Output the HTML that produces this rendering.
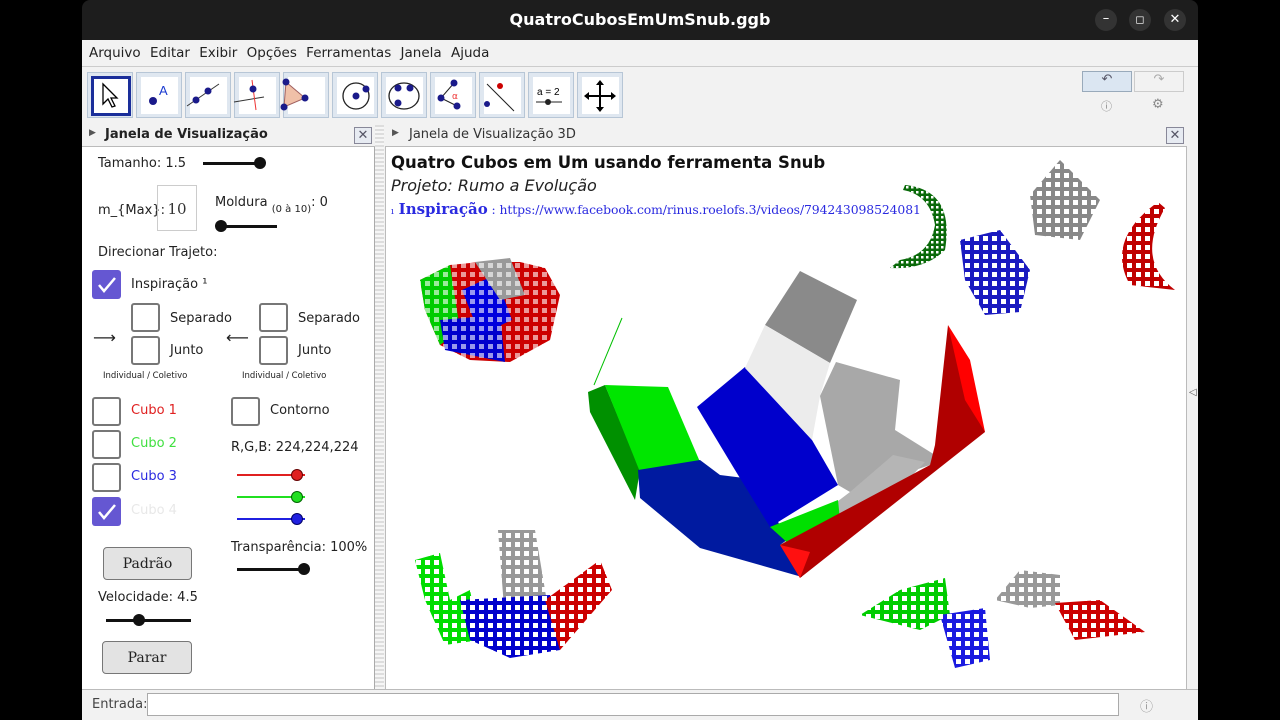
<!DOCTYPE html>
<html><head><meta charset="utf-8"><style>
*{margin:0;padding:0;box-sizing:border-box}
body{width:1280px;height:720px;background:#000;position:relative;overflow:hidden;font-family:"DejaVu Sans","Liberation Sans",sans-serif;font-size:13px;color:#222}
.a{position:absolute}
.cb{position:absolute;width:29px;height:29px;border:2px solid #777;border-radius:3px;background:#fff}
.cbk{position:absolute;width:29px;height:29px;border-radius:3px;background:#6557d2}
.btn{position:absolute;border:1px solid #777;border-radius:4px;background:#e3e3e3;font-family:"DejaVu Serif","Liberation Serif",serif;font-size:14px;text-align:center}
.tb{position:absolute;top:72px;width:46px;height:46px;background:#dfe7f0;border:1px solid #b7c6d6}
.tb div{position:absolute;left:4px;top:4px;width:37px;height:37px;background:#fff}
.sl{position:absolute;height:3px}
.kn{position:absolute;width:12px;height:12px;border-radius:50%}
</style></head><body>
<div class="a" style="left:82px;top:0;width:1116px;height:40px;background:#1d1d1d;border-radius:8px 8px 0 0"></div>
<div class="a" style="left:82px;top:10px;width:1116px;text-align:center;color:#fff;font-size:16px;font-weight:bold">QuatroCubosEmUmSnub.ggb</div>
<div class="a" style="left:1095px;top:9px;width:22px;height:22px;border-radius:50%;background:#333;color:#fff;text-align:center;line-height:20px">–</div>
<div class="a" style="left:1129px;top:9px;width:22px;height:22px;border-radius:50%;background:#333;color:#fff;text-align:center;line-height:21px;font-size:11px">◻</div>
<div class="a" style="left:1164px;top:9px;width:22px;height:22px;border-radius:50%;background:#333;color:#fff;text-align:center;line-height:22px">✕</div>
<div class="a" style="left:82px;top:40px;width:1116px;height:680px;background:#f2f2f2"></div>
<div class="a" style="left:89px;top:45px;font-size:13.5px;word-spacing:5px">Arquivo Editar Exibir Opções Ferramentas Janela Ajuda</div>
<div class="a" style="left:82px;top:66px;width:1116px;height:1px;background:#ccc"></div>
<div class="tb" style="left:87px"><div style="border:3px solid #1a2e9a;left:3px;top:3px;width:40px;height:40px"></div></div>
<div class="tb" style="left:136px"><div></div></div><div class="tb" style="left:185px"><div></div></div><div class="tb" style="left:234px"><div></div></div><div class="tb" style="left:283px"><div></div></div><div class="tb" style="left:332px"><div></div></div><div class="tb" style="left:381px"><div></div></div><div class="tb" style="left:430px"><div></div></div><div class="tb" style="left:479px"><div></div></div><div class="tb" style="left:528px"><div></div></div><div class="tb" style="left:577px"><div></div></div>
<svg class="a" style="left:82px;top:66px" width="560" height="60">
<path d="M21 18 L21 38 L26 33 L30 41 L33 40 L29 32 L35 32 Z" fill="#fff" stroke="#000" stroke-width="1.3"/>
<circle cx="71" cy="35" r="4" fill="#1a1a8a"/><text x="77" y="29" font-size="13" fill="#1a3ad0" font-family="Liberation Sans">A</text>
<line x1="105" y1="40" x2="137" y2="18" stroke="#333"/><circle cx="114" cy="34" r="3.5" fill="#1a1a8a"/><circle cx="126" cy="25" r="3.5" fill="#1a1a8a"/>
<line x1="152" y1="36" x2="182" y2="31" stroke="#333"/><line x1="170" y1="14" x2="174" y2="44" stroke="#e33"/><circle cx="171" cy="23" r="3.5" fill="#1a1a8a"/>
<path d="M204 16 L223 32 L202 41 Z" fill="#f0c0a8" stroke="#a06060"/><circle cx="204" cy="16" r="3.5" fill="#1a1a8a"/><circle cx="223" cy="32" r="3.5" fill="#1a1a8a"/><circle cx="202" cy="41" r="3.5" fill="#1a1a8a"/>
<circle cx="274" cy="30" r="13" fill="none" stroke="#222" stroke-width="1.3"/><circle cx="274" cy="30" r="3.5" fill="#1a1a8a"/><circle cx="284" cy="23" r="3.5" fill="#1a1a8a"/>
<ellipse cx="322" cy="30" rx="15" ry="13" fill="none" stroke="#222" stroke-width="1.3"/><circle cx="316" cy="22" r="3.5" fill="#1a1a8a"/><circle cx="328" cy="22" r="3.5" fill="#1a1a8a"/><circle cx="316" cy="37" r="3.5" fill="#1a1a8a"/>
<path d="M359 32 L372 17 M359 32 L375 40" stroke="#222"/><circle cx="359" cy="32" r="3.5" fill="#1a1a8a"/><circle cx="372" cy="17" r="3.5" fill="#1a1a8a"/><circle cx="375" cy="40" r="3.5" fill="#1a1a8a"/><text x="370" y="33" font-size="9" fill="#e33">α</text>
<line x1="405" y1="18" x2="432" y2="45" stroke="#222"/><circle cx="418" cy="20" r="3" fill="#c00"/><circle cx="405" cy="38" r="3" fill="#1a1a8a"/>
<text x="455" y="29" font-size="10" font-family="Liberation Sans">a = 2</text><line x1="454" y1="36" x2="480" y2="36" stroke="#222"/><circle cx="466" cy="36" r="3" fill="#222"/>
<path d="M518 16 V44 M504 30 H532" stroke="#000" stroke-width="2"/><path d="M518 14 l-4 5 h8z M518 46 l-4-5 h8z M502 30 l5-4 v8z M534 30 l-5-4 v8z" fill="#000"/>
</svg>
<div class="a" style="left:1082px;top:71px;width:50px;height:21px;background:#dbe6f2;border:1px solid #9ab;color:#556;text-align:center;font-size:13px">↶</div>
<div class="a" style="left:1134px;top:71px;width:50px;height:21px;background:#f2f2f2;border:1px solid #ccc;color:#aaa;text-align:center;font-size:13px">↷</div>
<div class="a" style="left:1101px;top:98px;color:#888;font-size:11px">ⓘ</div><div class="a" style="left:1152px;top:97px;color:#888;font-size:13px">⚙</div>
<div class="a" style="left:82px;top:125px;width:293px;height:22px;background:#f2f2f2;border-bottom:1px solid #bbb"></div>
<div class="a" style="left:89px;top:128px;font-size:9px;color:#555">▶</div>
<div class="a" style="left:105px;top:127px;font-weight:bold;font-size:13px">Janela de Visualização</div>
<div class="a" style="left:354px;top:127px;width:18px;height:17px;border:1px solid #889;background:#e7ebf2;text-align:center;font-size:13px;line-height:15px;color:#556">✕</div>
<div class="a" style="left:82px;top:147px;width:293px;height:542px;background:#fff;border-right:1px solid #aaa"></div>
<div class="a" style="left:375px;top:125px;width:9px;height:565px;background:repeating-linear-gradient(#ddd 0 2px,#f6f6f6 2px 4px)"></div>
<div class="a" style="left:385px;top:125px;width:802px;height:22px;background:#f2f2f2;border-bottom:1px solid #bbb"></div>
<div class="a" style="left:392px;top:128px;font-size:9px;color:#555">▶</div>
<div class="a" style="left:409px;top:127px;font-size:13px;color:#333">Janela de Visualização 3D</div>
<div class="a" style="left:1166px;top:127px;width:18px;height:17px;border:1px solid #889;background:#e7ebf2;text-align:center;font-size:13px;line-height:15px;color:#556">✕</div>
<div class="a" style="left:385px;top:147px;width:802px;height:542px;background:#fff;border-left:1px solid #bbb;border-right:1px solid #bbb"></div>
<div class="a" style="left:1189px;top:387px;font-size:10px;color:#555">◁</div>
<div class="a" style="left:98px;top:156px">Tamanho: 1.5</div>
<div class="sl" style="left:203px;top:162px;width:58px;background:#111"></div><div class="kn" style="left:254px;top:157px;background:#111"></div>
<div class="a" style="left:98px;top:203px">m_{Max}:</div>
<div class="a" style="left:157px;top:185px;width:40px;height:46px;border:1px solid #ccc;font-family:'DejaVu Serif',serif;font-size:15px;text-align:center;line-height:46px;color:#333">10</div>
<div class="a" style="left:215px;top:195px">Moldura <span style="font-size:10px;position:relative;top:6px">(0 à 10)</span>: 0</div>
<div class="sl" style="left:218px;top:225px;width:59px;background:#111"></div><div class="kn" style="left:215px;top:220px;background:#111"></div>
<div class="a" style="left:98px;top:245px">Direcionar Trajeto:</div>
<div class="cbk" style="left:92px;top:270px"></div>
<svg class="a" style="left:92px;top:270px" width="29" height="29"><path d="M7 15 L12 21 L23 8" fill="none" stroke="#fff" stroke-width="2.5"/></svg>
<div class="a" style="left:131px;top:277px">Inspiração ¹</div>
<div class="cb" style="left:131px;top:303px"></div><div class="a" style="left:170px;top:311px">Separado</div>
<div class="cb" style="left:131px;top:336px"></div><div class="a" style="left:170px;top:343px">Junto</div>
<div class="a" style="left:93px;top:328px;font-size:16px">⟶</div>
<div class="cb" style="left:259px;top:303px"></div><div class="a" style="left:298px;top:311px">Separado</div>
<div class="cb" style="left:259px;top:336px"></div><div class="a" style="left:298px;top:343px">Junto</div>
<div class="a" style="left:226px;top:328px;font-size:16px">⟵</div>
<div class="a" style="left:103px;top:371px;font-size:8.5px">Individual / Coletivo</div>
<div class="a" style="left:242px;top:371px;font-size:8.5px">Individual / Coletivo</div>
<div class="cb" style="left:92px;top:397px"></div><div class="a" style="left:131px;top:403px;color:#e02020">Cubo 1</div>
<div class="cb" style="left:231px;top:397px"></div><div class="a" style="left:270px;top:403px">Contorno</div>
<div class="cb" style="left:92px;top:430px"></div><div class="a" style="left:131px;top:436px;color:#40e040">Cubo 2</div>
<div class="a" style="left:231px;top:440px">R,G,B: 224,224,224</div>
<div class="cb" style="left:92px;top:463px"></div><div class="a" style="left:131px;top:469px;color:#2a2ae0">Cubo 3</div>
<div class="cbk" style="left:92px;top:497px"></div>
<svg class="a" style="left:92px;top:497px" width="29" height="29"><path d="M7 15 L12 21 L23 8" fill="none" stroke="#fff" stroke-width="2.5"/></svg>
<div class="a" style="left:131px;top:503px;color:#e8e8e8">Cubo 4</div>
<div class="sl" style="left:237px;top:474px;width:68px;height:2px;background:#e02020"></div><div class="kn" style="left:291px;top:469px;background:#e02020;border:1px solid #600"></div>
<div class="sl" style="left:237px;top:496px;width:68px;height:2px;background:#20e020"></div><div class="kn" style="left:291px;top:491px;background:#20e020;border:1px solid #060"></div>
<div class="sl" style="left:237px;top:518px;width:68px;height:2px;background:#2020e0"></div><div class="kn" style="left:291px;top:513px;background:#2020e0;border:1px solid #006"></div>
<div class="btn" style="left:103px;top:547px;width:89px;height:33px;line-height:33px">Padrão</div>
<div class="a" style="left:231px;top:540px">Transparência: 100%</div>
<div class="sl" style="left:237px;top:568px;width:70px;background:#111"></div><div class="kn" style="left:298px;top:563px;background:#111"></div>
<div class="a" style="left:98px;top:590px">Velocidade: 4.5</div>
<div class="sl" style="left:106px;top:619px;width:85px;background:#111"></div><div class="kn" style="left:133px;top:614px;background:#111"></div>
<div class="btn" style="left:102px;top:641px;width:90px;height:33px;line-height:33px">Parar</div>
<div class="a" style="left:391px;top:153px;font-weight:bold;font-size:16.5px;color:#111">Quatro Cubos em Um usando ferramenta Snub</div>
<div class="a" style="left:391px;top:176px;font-style:italic;font-size:16px;color:#222">Projeto: Rumo a Evolução</div>
<div class="a" style="left:391px;top:200px;font-family:'DejaVu Serif','Liberation Serif',serif;color:#2a2ae0;font-size:15px;white-space:nowrap"><span style="font-size:9px">ı</span> <b>Inspiração</b><span style="font-size:12.4px;letter-spacing:-0.1px"> : https://www.facebook.com/rinus.roelofs.3/videos/794243098524081</span></div>
<svg class="a" style="left:385px;top:147px" width="802" height="542">
<defs><pattern id="h" width="9" height="9" patternUnits="userSpaceOnUse"><rect x="2" y="2" width="5" height="5" fill="#fff"/></pattern>
<pattern id="h2" width="5" height="5" patternUnits="userSpaceOnUse"><rect x="1" y="1" width="2.5" height="2.5" fill="#fff"/></pattern></defs>
<g transform="translate(-385,-147)">
<line x1="594" y1="385" x2="622" y2="318" stroke="#00c000" stroke-width="1"/>
<polygon points="588,392 605,385 640,470 635,500 590,412" fill="#009000"/>
<polygon points="605,385 668,387 700,462 640,472" fill="#00e600"/>
<polygon points="640,498 638,470 700,460 720,475 760,480 802,577 700,548" fill="#001aa0"/>
<polygon points="697,407 745,367 812,440 838,485 770,527 735,470" fill="#0000cc"/>
<polygon points="765,325 800,271 857,300 830,363" fill="#8a8a8a"/>
<polygon points="745,368 765,325 830,363 820,396 812,440" fill="#ececec"/>
<polygon points="820,396 836,362 900,380 895,430 935,455 930,465 850,492 838,485" fill="#a8a8a8"/>
<polygon points="850,492 893,455 925,462 860,530 780,545" fill="#b5b5b5"/>
<polygon points="770,527 838,500 840,520 790,545" fill="#00e000"/>
<polygon points="948,325 985,432 800,578 780,545 930,465 935,445" fill="#b00000"/>
<polygon points="948,325 970,360 985,432 965,400" fill="#ff0000"/>
<polygon points="780,545 810,552 800,578" fill="#ff1010"/>
<g>
<polygon points="420,280 450,265 480,262 520,262 545,268 560,295 550,340 510,362 470,360 440,345 425,310" fill="#cc0000"/>
<polygon points="420,280 450,265 460,330 440,345 425,310" fill="#00cc00"/>
<polygon points="440,320 500,315 505,362 445,350" fill="#0000cc"/>
<polygon points="462,290 495,275 512,320 480,335" fill="#0000dd"/>
<polygon points="475,262 510,258 525,295 500,300" fill="#999"/>
<polygon points="420,262 565,262 565,365 420,365" fill="url(#h)" opacity="0.6"/>
</g>
<g>
<polygon points="415,560 440,553 450,600 470,590 480,640 445,645 425,600" fill="#00dd00"/>
<polygon points="498,530 535,530 550,620 505,620" fill="#999"/>
<polygon points="460,600 550,595 560,650 510,658 470,640" fill="#0000cc"/>
<polygon points="545,600 600,560 612,590 560,650" fill="#cc0000"/>
<polygon points="410,528 615,528 615,660 410,660" fill="url(#h)"/>
</g>
<path d="M905,185 Q955,190 945,250 Q925,270 890,268 L900,260 Q930,255 935,225 Q930,195 903,190Z" fill="#0a6a0a"/>
<path d="M905,185 Q955,190 945,250 Q925,270 890,268 L900,260 Q930,255 935,225 Q930,195 903,190Z" fill="url(#h2)"/>
<polygon points="960,240 1000,230 1030,270 1020,312 985,315 965,280" fill="#1a1ac0"/>
<polygon points="1030,195 1060,160 1100,200 1080,240 1035,235" fill="#888"/>
<path d="M1158,202 Q1105,240 1130,285 L1175,290 Q1135,260 1165,208Z" fill="#c00000"/>
<polygon points="860,615 900,590 945,578 950,615 920,630" fill="#00cc00"/>
<polygon points="940,615 985,608 990,660 955,668" fill="#1a1ae0"/>
<polygon points="995,600 1020,570 1060,575 1060,605 1030,608" fill="#999"/>
<polygon points="1055,603 1100,600 1145,632 1075,640" fill="#cc0000"/>
<polygon points="955,155 1180,155 1180,320 955,320" fill="url(#h)"/>
<polygon points="855,565 1150,565 1150,670 855,670" fill="url(#h)"/>
</g></svg>
<div class="a" style="left:82px;top:689px;width:1116px;height:31px;background:#f2f2f2;border-top:1px solid #bbb"></div>
<div class="a" style="left:92px;top:697px;color:#444">Entrada:</div>
<div class="a" style="left:147px;top:693px;width:972px;height:23px;background:#fff;border:1px solid #aaa"></div>
<div class="a" style="left:1140px;top:696px;color:#999;font-size:13px">ⓘ</div>
</body></html>
